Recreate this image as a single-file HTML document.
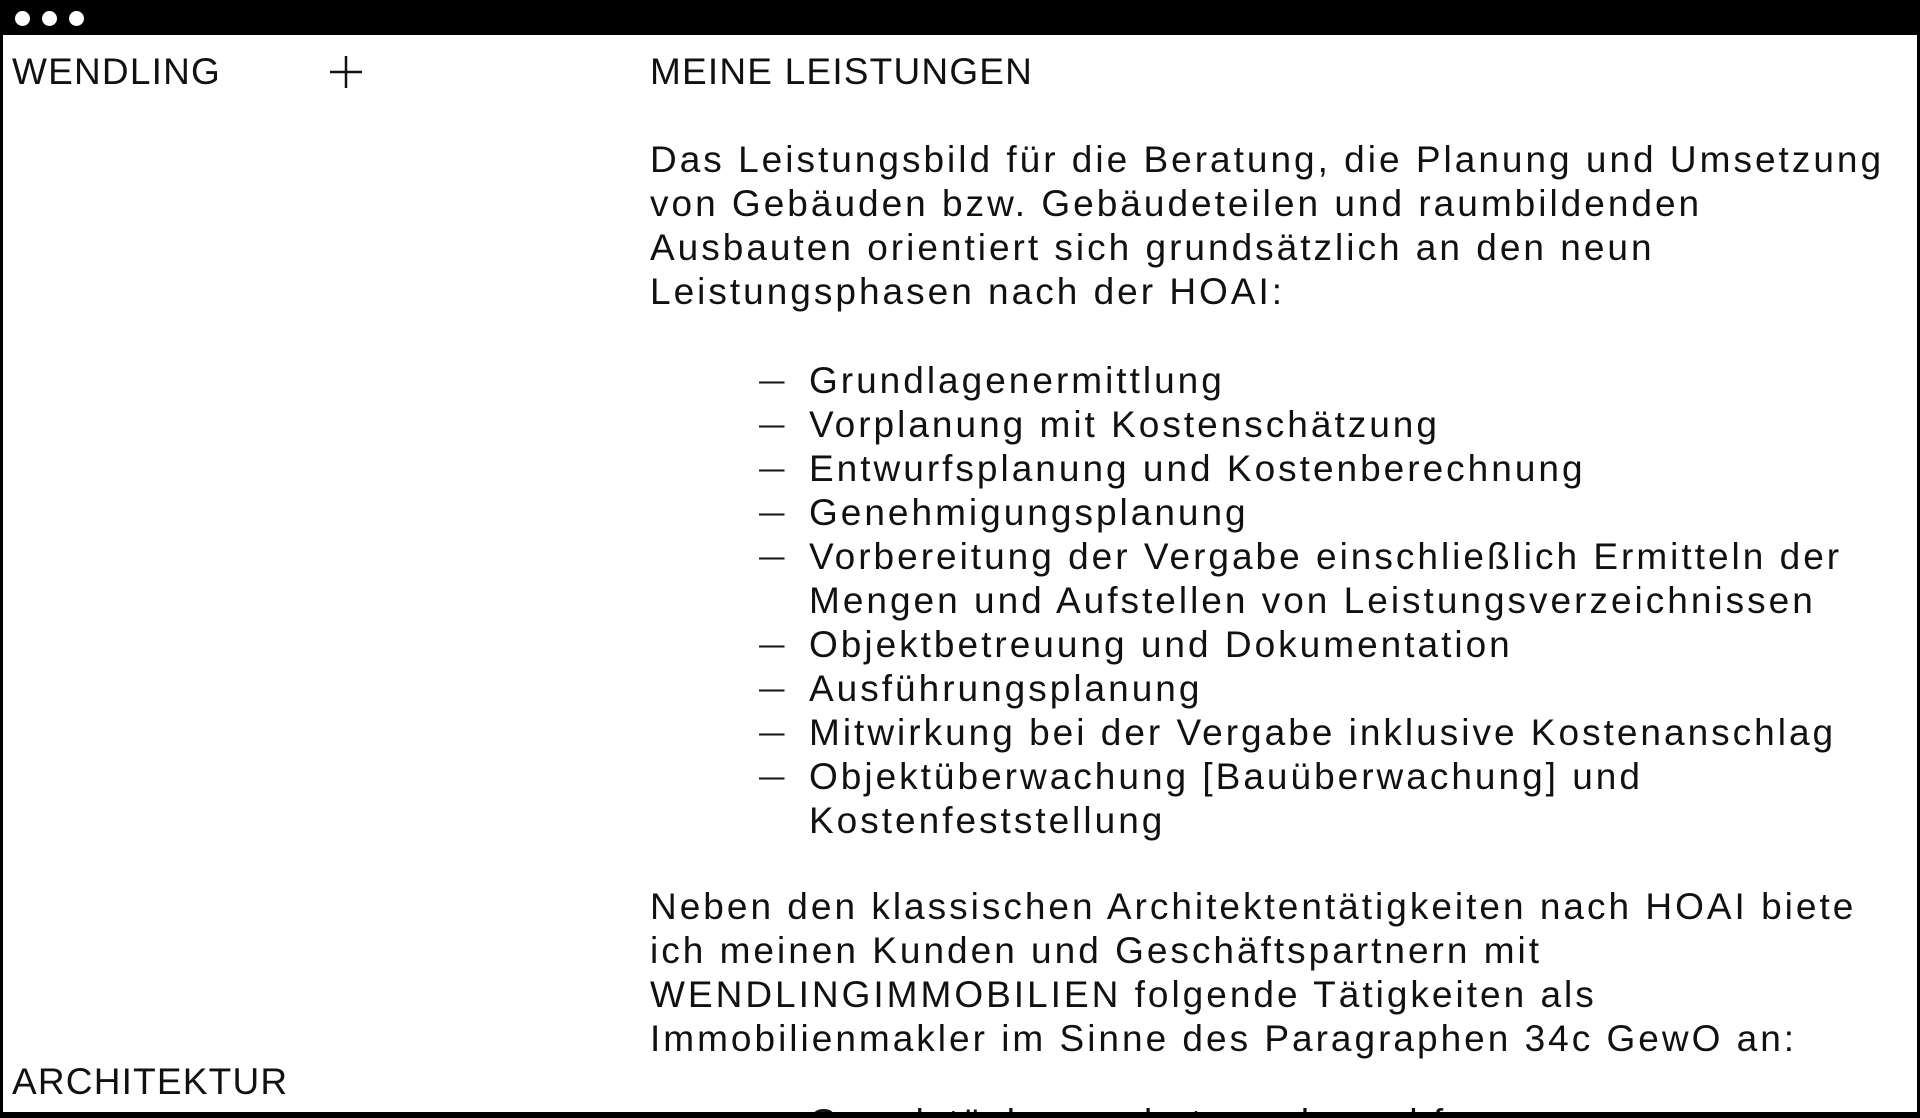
<!DOCTYPE html>
<html><head><meta charset="utf-8"><style>
html,body{margin:0;padding:0;width:1920px;height:1118px;overflow:hidden;}
body{background:#fff;position:relative;font-family:"Liberation Sans",sans-serif;color:#111;}
.bar{position:absolute;left:0;top:0;width:1920px;height:35px;background:#000;z-index:2}
.dot{position:absolute;top:11px;width:15px;height:15px;border-radius:50%;background:#fff;z-index:3}
.frame{position:absolute;left:0;top:35px;width:1920px;height:1083px;box-sizing:border-box;border-left:3px solid #000;border-right:3px solid #000;z-index:2}
.bottom{position:absolute;left:0;top:1112px;width:1920px;height:6px;background:#000;z-index:2}
.t{position:absolute;font-size:37px;line-height:44px;white-space:nowrap;letter-spacing:3px;}
.u{letter-spacing:1.2px}
</style></head><body>
<div class="bar"></div>
<div class="dot" style="left:15px"></div><div class="dot" style="left:42px"></div><div class="dot" style="left:69px"></div>
<div class="frame"></div>
<div class="t u" style="left:12px;top:50px">WENDLING</div>
<svg style="position:absolute;left:330px;top:56px" width="32" height="32"><path d="M16 0V32M0 16H32" stroke="#111" stroke-width="2.5"/></svg>
<div class="t u" style="left:650px;top:50px">MEINE LEISTUNGEN</div>
<div class="t" style="left:650px;top:138px">Das Leistungsbild für die Beratung, die Planung und Umsetzung<br>von Gebäuden bzw. Gebäudeteilen und raumbildenden<br>Ausbauten orientiert sich grundsätzlich an den neun<br>Leistungsphasen nach der HOAI:</div>
<div class="t" style="left:759px;top:359px;letter-spacing:0;font-size:30px;transform:scaleX(0.85);transform-origin:left">—<br>—<br>—<br>—<br>—<br><br>—<br>—<br>—<br>—</div>
<div class="t" style="left:809px;top:359px">Grundlagenermittlung<br>Vorplanung mit Kostenschätzung<br>Entwurfsplanung und Kostenberechnung<br>Genehmigungsplanung<br>Vorbereitung der Vergabe einschließlich Ermitteln der<br>Mengen und Aufstellen von Leistungsverzeichnissen<br>Objektbetreuung und Dokumentation<br>Ausführungsplanung<br>Mitwirkung bei der Vergabe inklusive Kostenanschlag<br>Objektüberwachung [Bauüberwachung] und<br>Kostenfeststellung</div>
<div class="t" style="left:650px;top:885px">Neben den klassischen Architektentätigkeiten nach HOAI biete<br>ich meinen Kunden und Geschäftspartnern mit<br>WENDLINGIMMOBILIEN folgende Tätigkeiten als<br>Immobilienmakler im Sinne des Paragraphen 34c GewO an:</div>
<div class="t" style="left:809px;top:1101px">Grundstücksangebote und -nachfrage</div>
<div class="t u" style="left:12px;top:1060px">ARCHITEKTUR</div>
<div class="bottom"></div>
</body></html>
